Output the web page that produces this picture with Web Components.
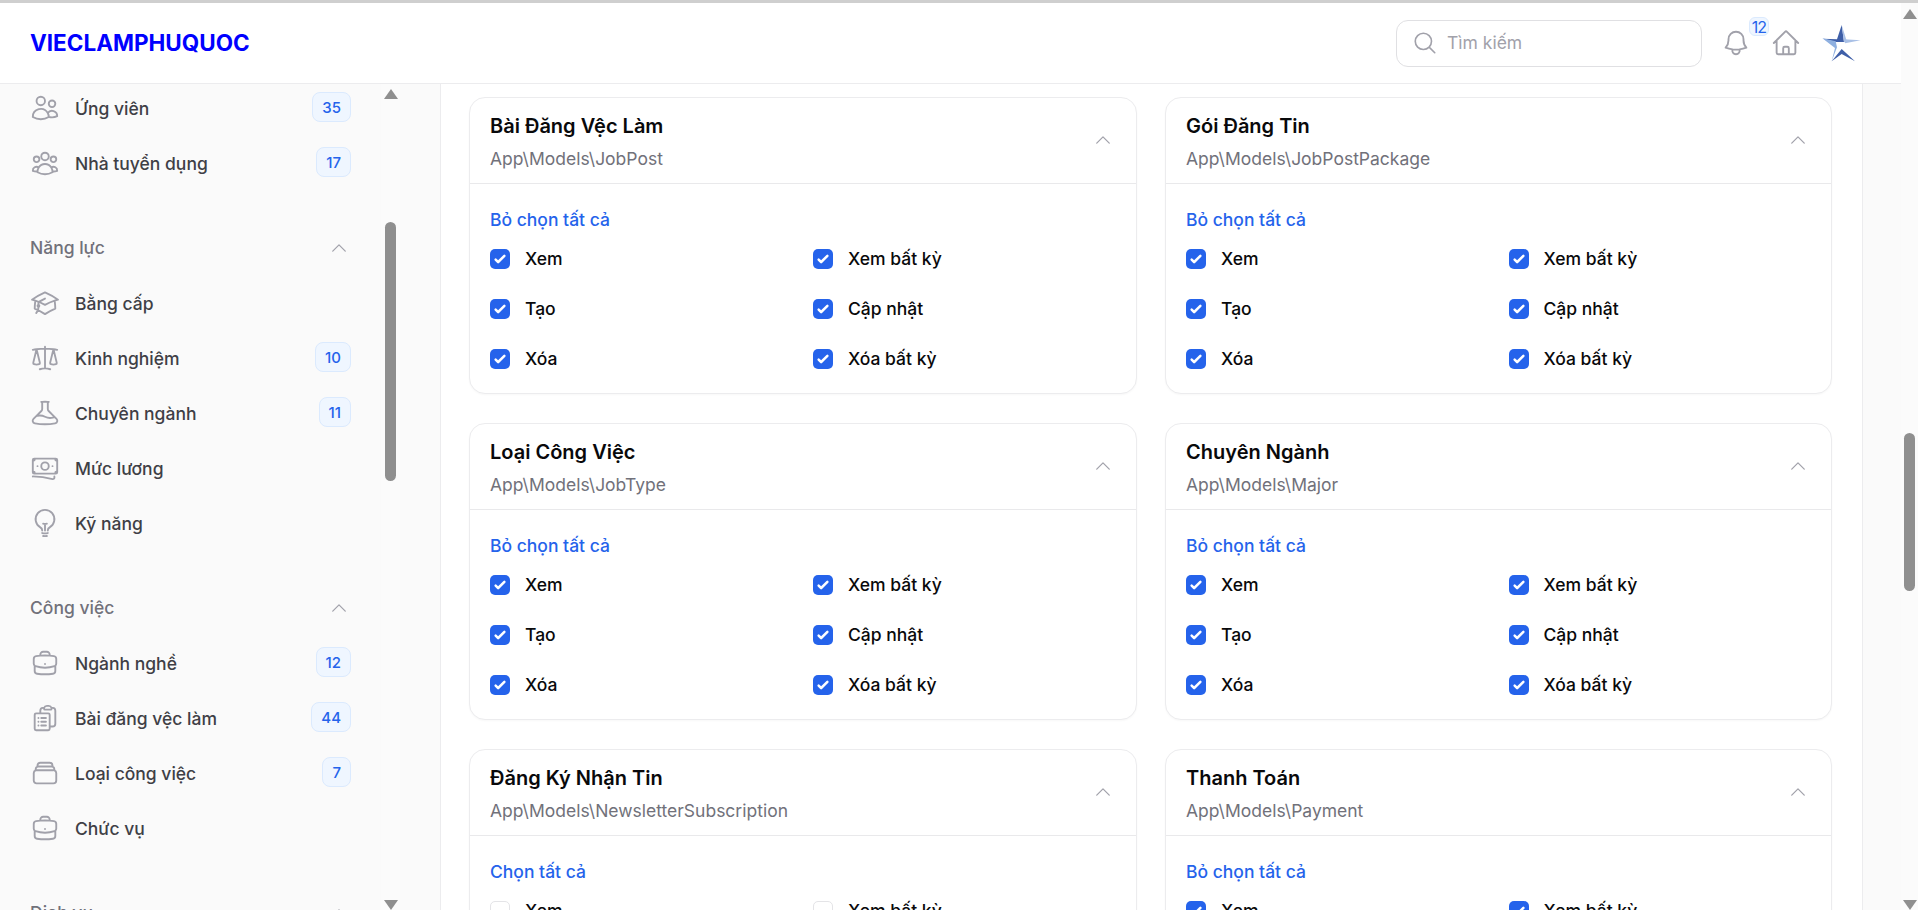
<!DOCTYPE html>
<html lang="vi">
<head>
<meta charset="utf-8">
<title>Vieclamphuquoc</title>
<style>
   html, body { margin: 0; height: 100%; overflow: hidden; background: #fff; font-family: 'Inter', 'Liberation Sans', sans-serif; }
</style>
</head>
<body>

<app-shell>
   <top-bar slot="top" logo="VIECLAMPHUQUOC" count="12"></top-bar>

   <side-nav slot="side">
      <nav-item icon="users" badge="35">Ứng viên</nav-item>
      <nav-item icon="userGroup" badge="17">Nhà tuyển dụng</nav-item>
      <nav-group label="Năng lực">
         <nav-item icon="academic">Bằng cấp</nav-item>
         <nav-item icon="scale" badge="10">Kinh nghiệm</nav-item>
         <nav-item icon="beaker" badge="11">Chuyên ngành</nav-item>
         <nav-item icon="banknotes">Mức lương</nav-item>
         <nav-item icon="bulb">Kỹ năng</nav-item>
      </nav-group>
      <nav-group label="Công việc">
         <nav-item icon="briefcase" badge="12">Ngành nghề</nav-item>
         <nav-item icon="clipboard" badge="44">Bài đăng vệc làm</nav-item>
         <nav-item icon="stack" badge="7">Loại công việc</nav-item>
         <nav-item icon="briefcase">Chức vụ</nav-item>
      </nav-group>
      <nav-group label="Dịch vụ"></nav-group>
   </side-nav>

   <perm-grid slot="main">
      <perm-card heading="Bài Đăng Vệc Làm" model="App\Models\JobPost"></perm-card>
      <perm-card heading="Gói Đăng Tin" model="App\Models\JobPostPackage"></perm-card>
      <perm-card heading="Loại Công Việc" model="App\Models\JobType"></perm-card>
      <perm-card heading="Chuyên Ngành" model="App\Models\Major"></perm-card>
      <perm-card heading="Đăng Ký Nhận Tin" model="App\Models\NewsletterSubscription" empty></perm-card>
      <perm-card heading="Thanh Toán" model="App\Models\Payment"></perm-card>
   </perm-grid>

   <scroll-rail slot="rail" gap-top="414" thumb-height="158" pad-top="6" page></scroll-rail>
</app-shell>

<script>
// heroicons outline paths, 24 grid
const ICONS = {
   users: 'M15 19.128a9.38 9.38 0 0 0 2.625.372 9.337 9.337 0 0 0 4.121-.952 4.125 4.125 0 0 0-7.533-2.493M15 19.128v-.003c0-1.113-.285-2.16-.786-3.07M15 19.128v.106A12.318 12.318 0 0 1 8.624 21c-2.331 0-4.512-.645-6.374-1.766l-.001-.109a6.375 6.375 0 0 1 11.964-3.07M12 6.375a3.375 3.375 0 1 1-6.75 0 3.375 3.375 0 0 1 6.75 0Zm8.25 2.25a2.625 2.625 0 1 1-5.25 0 2.625 2.625 0 0 1 5.25 0Z',
   userGroup: 'M18 18.72a9.094 9.094 0 0 0 3.741-.479 3 3 0 0 0-4.682-2.72m.94 3.198.001.031c0 .225-.012.447-.037.666A11.944 11.944 0 0 1 12 21c-2.17 0-4.207-.576-5.963-1.584A6.062 6.062 0 0 1 6 18.719m12 0a5.971 5.971 0 0 0-.941-3.197m0 0A5.995 5.995 0 0 0 12 12.75a5.995 5.995 0 0 0-5.058 2.772m0 0a3 3 0 0 0-4.681 2.72 8.986 8.986 0 0 0 3.74.477m.94-3.197a5.971 5.971 0 0 0-.94 3.197M15 6.75a3 3 0 1 1-6 0 3 3 0 0 1 6 0Zm6 2.25a2.25 2.25 0 1 1-4.5 0 2.25 2.25 0 0 1 4.5 0Zm-13.5 0a2.25 2.25 0 1 1-4.5 0 2.25 2.25 0 0 1 4.5 0Z',
   academic: 'M4.26 10.147a60.438 60.438 0 0 0-.491 6.347A48.62 48.62 0 0 1 12 20.904a48.62 48.62 0 0 1 8.232-4.41 60.46 60.46 0 0 0-.491-6.347m-15.482 0a50.636 50.636 0 0 0-2.658-.813A59.906 59.906 0 0 1 12 3.493a59.903 59.903 0 0 1 10.399 5.84c-.896.248-1.783.52-2.658.814m-15.482 0A50.717 50.717 0 0 1 12 13.489a50.702 50.702 0 0 1 7.74-3.342M6.75 15a.75.75 0 1 0 0-1.5.75.75 0 0 0 0 1.5Zm0 0v-3.675A55.378 55.378 0 0 1 12 8.443m-7.007 11.55A5.981 5.981 0 0 0 6.75 15.75v-1.5',
   scale: 'M12 3v17.25m0 0c-1.472 0-2.882.265-4.185.75M12 20.25c1.472 0 2.882.265 4.185.75M18.75 4.97A48.416 48.416 0 0 0 12 4.5c-2.291 0-4.545.16-6.75.47m13.5 0c1.01.143 2.01.317 3 .52m-3-.52 2.62 10.726c.122.499-.106 1.028-.589 1.202a5.988 5.988 0 0 1-2.031.352 5.988 5.988 0 0 1-2.031-.352c-.483-.174-.711-.703-.59-1.202L18.75 4.971Zm-16.5.52c.99-.203 1.99-.377 3-.52m0 0 2.62 10.726c.122.499-.106 1.028-.589 1.202a5.989 5.989 0 0 1-2.031.352 5.989 5.989 0 0 1-2.031-.352c-.483-.174-.711-.703-.59-1.202L5.25 4.971Z',
   beaker: 'M9.75 3.104v5.714a2.25 2.25 0 0 1-.659 1.591L5 14.5M9.75 3.104c-.251.023-.501.05-.75.082m.75-.082a24.301 24.301 0 0 1 4.5 0m0 0v5.714c0 .597.237 1.17.659 1.591L19.8 15.3M14.25 3.104c.251.023.501.05.75.082M19.8 15.3l-1.57.393A9.065 9.065 0 0 1 12 15a9.065 9.065 0 0 0-6.23-.693L5 14.5m14.8.8 1.402 1.402c1.232 1.232.65 3.318-1.067 3.611A48.309 48.309 0 0 1 12 21c-2.773 0-5.491-.235-8.135-.687-1.718-.293-2.3-2.379-1.067-3.61L5 14.5',
   banknotes: 'M2.25 18.75a60.07 60.07 0 0 1 15.797 2.101c.727.198 1.453-.342 1.453-1.096V18.75M3.75 4.5v.75A.75.75 0 0 1 3 6h-.75m0 0v-.375c0-.621.504-1.125 1.125-1.125H20.25M2.25 6v9m18-10.5v.75c0 .414.336.75.75.75h.75m-1.5-1.5h.375c.621 0 1.125.504 1.125 1.125v9.75c0 .621-.504 1.125-1.125 1.125h-.375m1.5-1.5H21a.75.75 0 0 0-.75.75v.75m0 0H3.75m0 0h-.375a1.125 1.125 0 0 1-1.125-1.125V15m1.5 1.5v-.75A.75.75 0 0 0 3 15h-.75M15 10.5a3 3 0 1 1-6 0 3 3 0 0 1 6 0Zm3 0h.008v.008H18V10.5Zm-12 0h.008v.008H6V10.5Z',
   bulb: 'M12 18v-5.25m0 0a6.01 6.01 0 0 0 1.5-.189m-1.5.189a6.01 6.01 0 0 1-1.5-.189m3.75 7.478a12.06 12.06 0 0 1-4.5 0m3.75 2.383a14.406 14.406 0 0 1-3 0M14.25 18v-.192c0-.983.658-1.823 1.508-2.316a7.5 7.5 0 1 0-7.517 0c.85.493 1.509 1.333 1.509 2.316V18',
   briefcase: 'M20.25 14.15v4.25c0 1.094-.787 2.036-1.872 2.18-2.087.277-4.216.42-6.378.42s-4.291-.143-6.378-.42c-1.085-.144-1.872-1.086-1.872-2.18v-4.25m16.5 0a2.18 2.18 0 0 0 .75-1.661V8.706c0-1.081-.768-2.015-1.837-2.175a48.114 48.114 0 0 0-3.413-.387m4.5 8.006c-.194.165-.42.295-.673.38A23.978 23.978 0 0 1 12 15.75c-2.648 0-5.195-.429-7.577-1.22a2.016 2.016 0 0 1-.673-.38m0 0A2.18 2.18 0 0 1 3 12.489V8.706c0-1.081.768-2.015 1.837-2.175a48.111 48.111 0 0 1 3.413-.387m7.5 0V5.25A2.25 2.25 0 0 0 13.5 3h-3a2.25 2.25 0 0 0-2.25 2.25v.894m7.5 0a48.667 48.667 0 0 0-7.5 0M12 12.75h.008v.008H12v-.008Z',
   clipboard: 'M9 12h3.75M9 15h3.75M9 18h3.75m3 .75H18a2.25 2.25 0 0 0 2.25-2.25V6.108c0-1.123-.84-2.1-1.976-2.192a48.424 48.424 0 0 0-1.123-.08m-5.801 0c-.065.21-.1.433-.1.664 0 .414.336.75.75.75h4.5a.75.75 0 0 0 .75-.75 2.25 2.25 0 0 0-.1-.664m-5.8 0A2.251 2.251 0 0 1 13.5 2.25H15c1.012 0 1.867.668 2.15 1.586m-5.8 0c-.376.023-.75.05-1.124.08C9.095 4.01 8.25 4.973 8.25 6.108V8.25m0 0H4.875c-.621 0-1.125.504-1.125 1.125v11.25c0 .621.504 1.125 1.125 1.125h9.75c.621 0 1.125-.504 1.125-1.125V9.375c0-.621-.504-1.125-1.125-1.125H8.25ZM6.75 12h.008v.008H6.75V12Zm0 3h.008v.008H6.75V15Zm0 3h.008v.008H6.75V18Z',
   stack: 'M6 6.878V6a2.25 2.25 0 0 1 2.25-2.25h7.5A2.25 2.25 0 0 1 18 6v.878m-12 0c.235-.083.487-.128.75-.128h10.5c.263 0 .515.045.75.128m-12 0A2.25 2.25 0 0 0 4.5 9v.878m13.5-3A2.25 2.25 0 0 1 19.5 9v.878m0 0a2.246 2.246 0 0 0-.75-.128H5.25c-.263 0-.515.045-.75.128m15 0A2.25 2.25 0 0 1 21 12v6a2.25 2.25 0 0 1-2.25 2.25H5.25A2.25 2.25 0 0 1 3 18v-6c0-.98.626-1.813 1.5-2.122',
   bell: 'M14.857 17.082a23.848 23.848 0 0 0 5.454-1.31A8.967 8.967 0 0 1 18 9.75V9A6 6 0 0 0 6 9v.75a8.967 8.967 0 0 1-2.312 6.022c1.733.64 3.56 1.085 5.455 1.31m5.714 0a24.255 24.255 0 0 1-5.714 0m5.714 0a3 3 0 1 1-5.714 0',
   home: 'm2.25 12 8.954-8.955c.44-.439 1.152-.439 1.591 0L21.75 12M4.5 9.75v10.125c0 .621.504 1.125 1.125 1.125H9.75v-4.875c0-.621.504-1.125 1.125-1.125h2.25c.621 0 1.125.504 1.125 1.125V21h4.125c.621 0 1.125-.504 1.125-1.125V9.75M8.25 21h8.25',
   search: 'm21 21-5.197-5.197m0 0A7.5 7.5 0 1 0 5.196 5.196a7.5 7.5 0 0 0 10.607 10.607Z',
   chevron: 'm4.5 15.75 7.5-7.5 7.5 7.5'
}

function icon(name, size, color, stroke = 1.5) {
   return `<svg width="${size}" height="${size}" viewBox="0 0 24 24" fill="none" stroke="${color}" stroke-width="${stroke}" stroke-linecap="round" stroke-linejoin="round" style="display:block;flex:none"><path d="${ICONS[name]}"/></svg>`
}

// PAGE FRAME
class AppShell extends HTMLElement {
   constructor() {
      super()
      this.attachShadow({ mode: 'open' })
      this.shadowRoot.innerHTML = `
      <style>
         :host { display: flex; flex-direction: column; height: 910px; overflow: hidden; }
         .strip { height: 3px; flex: none; background: #cfcfcf; }
         .frame { flex: 1; min-height: 0; display: flex; }
         .left { flex: 1; min-width: 0; display: flex; flex-direction: column; }
         .body { flex: 1; min-height: 0; display: flex; }
         .main { flex: 1; min-width: 0; overflow: hidden; background: #fff; }
         .gutter { width: 38px; flex: none; background: #fafafa; border-left: 1px solid #ececee; }
      </style>
      <div class="strip"></div>
      <div class="frame">
         <div class="left">
            <slot name="top"></slot>
            <div class="body">
               <slot name="side"></slot>
               <div class="main"><slot name="main"></slot></div>
               <div class="gutter"></div>
            </div>
         </div>
         <slot name="rail"></slot>
      </div>`
   }
}

// HEADER
class TopBar extends HTMLElement {
   connectedCallback() {
      this.attachShadow({ mode: 'open' })
      this.shadowRoot.innerHTML = `
      <style>
         :host { display: flex; align-items: center; height: 81px; box-sizing: border-box; flex: none; padding: 0 34px 0 30px; background: #fff; border-bottom: 1px solid #ececee; }
         .logo { font-size: 22.5px; font-weight: 700; color: #0000ff; margin-bottom: 2px; }
         .search { margin-left: auto; width: 306px; height: 47px; box-sizing: border-box; display: flex; align-items: center; gap: 9px; padding-left: 15px; border: 1px solid #e0e0e3; border-radius: 12px; color: #a1a1aa; font-size: 17.5px; }
         .search span { margin-bottom: 1px; }
         .bell { position: relative; margin-left: 19px; }
         .count { position: absolute; left: 28px; top: -11px; width: 20px; height: 19px; box-sizing: border-box; display: flex; align-items: center; justify-content: center; background: #eff6ff; border: 1px solid #dbeafe; border-radius: 6px; color: #2563eb; font-size: 16px; letter-spacing: -1px; }
         .home { margin-left: 20px; }
         .star { margin-left: 14px; display: block; }
      </style>
      <div class="logo">${this.getAttribute('logo')}</div>
      <div class="search">${icon('search', 26, '#a1a1aa')}<span>Tìm kiếm</span></div>
      <div class="bell">${icon('bell', 30, '#a1a1aa')}<span class="count">${this.getAttribute('count')}</span></div>
      <div class="home">${icon('home', 30, '#a1a1aa')}</div>
      <svg class="star" width="52" height="46" viewBox="0 0 156 138">
         <polygon points="80,15 87,66 62,66 24,56 66,58" fill="#3f5fa8"/>
         <polygon points="87,58 137,61 90,70" fill="#a9c0e6"/>
         <polygon points="22,55 62,64 66,82 50,124 60,84" fill="#8fb0e0"/>
         <polygon points="80,15 96,66 87,66" fill="#a9c0e6"/>
         <polygon points="50,124 80,87 120,124 80,102" fill="#3f5fa8"/>
      </svg>`
   }
}

// SIDEBAR
class SideNav extends HTMLElement {
   constructor() {
      super()
      this.attachShadow({ mode: 'open' })
      this.shadowRoot.innerHTML = `
      <style>
         :host { display: flex; flex: none; width: 441px; box-sizing: border-box; background: #fafafa; border-right: 1px solid #ececee; overflow: hidden; }
         .list { width: 381px; flex: none; box-sizing: border-box; padding: 0 30px; margin-top: -3.5px; }
      </style>
      <div class="list"><slot></slot></div>
      <scroll-rail gap-top="123" thumb-height="259" pad-top="5"></scroll-rail>`
   }
}

class NavGroup extends HTMLElement {
   connectedCallback() {
      this.attachShadow({ mode: 'open' })
      this.shadowRoot.innerHTML = `
      <style>
         :host { display: block; margin-top: 30px; }
         .head { height: 55px; box-sizing: border-box; padding-bottom: 1px; display: flex; align-items: center; justify-content: space-between; padding-right: 2.5px; font-size: 17.5px; font-weight: 500; color: #71717a; }
      </style>
      <div class="head"><span>${this.getAttribute('label')}</span>${icon('chevron', 20, '#a1a1aa')}</div>
      <slot></slot>`
   }
}

class NavItem extends HTMLElement {
   connectedCallback() {
      const badge = this.getAttribute('badge')
      this.attachShadow({ mode: 'open' })
      this.shadowRoot.innerHTML = `
      <style>
         :host { display: flex; align-items: center; height: 55px; gap: 15px; font-size: 17.5px; font-weight: 500; color: #3f3f46; }
         .label { flex: 1; }
         .badge { height: 30px; box-sizing: border-box; padding: 0 9px; margin-top: -2px; display: flex; align-items: center; background: #eff6ff; border: 1px solid #dbeafe; border-radius: 8px; color: #2563eb; font-size: 15px; }
      </style>
      ${icon(this.getAttribute('icon'), 30, '#a1a1aa')}
      <span class="label"><slot></slot></span>
      ${badge ? `<span class="badge">${badge}</span>` : ''}`
   }
}

// fake browser scrollbar
class ScrollRail extends HTMLElement {
   connectedCallback() {
      const page = this.hasAttribute('page')
      this.attachShadow({ mode: 'open' })
      this.shadowRoot.innerHTML = `
      <style>
         :host { display: flex; flex-direction: column; align-items: center; flex: none; width: ${page ? 17 : 19}px; height: 100%; background: #fbfbfb; box-sizing: border-box; padding-top: ${this.getAttribute('pad-top')}px; overflow: hidden; }
         .up, .down { width: 0; height: 0; border-left: 7px solid transparent; border-right: 7px solid transparent; flex: none; }
         .up { border-bottom: 10px solid #8f8f8f; }
         .down { border-top: 10px solid #8f8f8f; margin-top: auto; }
         .thumb { width: 11px; flex: none; background: #8f8f8f; border-radius: 6px; margin-top: ${this.getAttribute('gap-top')}px; height: ${this.getAttribute('thumb-height')}px; }
      </style>
      <div class="up"></div>
      <div class="thumb"></div>
      <div class="down"></div>`
   }
}

// PERMISSION CARDS
class PermGrid extends HTMLElement {
   constructor() {
      super()
      this.attachShadow({ mode: 'open' })
      this.shadowRoot.innerHTML = `
      <style>
         :host { display: grid; grid-template-columns: 668px 1fr; gap: 29px 28px; padding: 13px 30px 0 28px; }
      </style>
      <slot></slot>`
   }
}

class PermCard extends HTMLElement {
   connectedCallback() {
      const empty = this.hasAttribute('empty')
      const names = ['Xem', 'Xem bất kỳ', 'Tạo', 'Cập nhật', 'Xóa', 'Xóa bất kỳ']
      this.attachShadow({ mode: 'open' })
      this.shadowRoot.innerHTML = `
      <style>
         :host { display: block; height: 297px; box-sizing: border-box; background: #fff; border: 1px solid #ececee; border-radius: 16px; box-shadow: 0 1px 2px rgb(0 0 0 / 0.03); }
         .head { height: 86px; box-sizing: border-box; display: flex; align-items: center; justify-content: space-between; padding: 0 23px 0 20px; border-bottom: 1px solid #e9e9eb; }
         .head svg { margin-bottom: 2px; }
         .titles { margin-top: 4px; }
         h3 { margin: 0; font-size: 20px; font-weight: 600; line-height: 25px; color: #09090b; }
         .model { margin-top: 7px; font-size: 17.5px; line-height: 25px; color: #71717a; }
         .body { padding: 23px 20px 0; }
         .all { font-size: 17.5px; font-weight: 500; line-height: 25px; color: #2563eb; margin-bottom: 15px; }
         .rows { display: grid; grid-template-columns: 1fr 1fr; gap: 26px 20px; }
      </style>
      <div class="head">
         <div class="titles"><h3>${this.getAttribute('heading')}</h3><div class="model">${this.getAttribute('model')}</div></div>
         ${icon('chevron', 20, '#a1a1aa')}
      </div>
      <div class="body">
         <div class="all">${empty ? 'Chọn tất cả' : 'Bỏ chọn tất cả'}</div>
         <div class="rows">${names.map(n => `<perm-check ${empty ? '' : 'checked'}>${n}</perm-check>`).join('')}</div>
      </div>`
   }
}

class PermCheck extends HTMLElement {
   connectedCallback() {
      this.attachShadow({ mode: 'open' })
      this.shadowRoot.innerHTML = `
      <style>
         :host { display: flex; align-items: center; gap: 15px; height: 24px; font-size: 17.5px; font-weight: 500; color: #09090b; }
         .box { width: 20px; height: 20px; flex: none; box-sizing: border-box; border-radius: 5px; display: flex; align-items: center; justify-content: center; }
         .on { background: #2563eb; }
         .off { background: #fff; border: 1px solid #e4e4e7; }
         .text { margin-bottom: 2px; }
      </style>
      <span class="box ${this.hasAttribute('checked') ? 'on' : 'off'}">
         ${this.hasAttribute('checked') ? '<svg width="20" height="20" viewBox="0 0 16 16" fill="#fff"><path d="M12.207 4.793a1 1 0 010 1.414l-5 5a1 1 0 01-1.414 0l-2-2a1 1 0 011.414-1.414L6.5 9.086l4.293-4.293a1 1 0 011.414 0z"/></svg>' : ''}
      </span>
      <span class="text"><slot></slot></span>`
   }
}

// Register the elements
function register() {
   customElements.define('scroll-rail', ScrollRail)
   customElements.define('perm-check', PermCheck)
   customElements.define('perm-card', PermCard)
   customElements.define('perm-grid', PermGrid)
   customElements.define('nav-item', NavItem)
   customElements.define('nav-group', NavGroup)
   customElements.define('side-nav', SideNav)
   customElements.define('top-bar', TopBar)
   customElements.define('app-shell', AppShell)
}

register()
</script>
</body>
</html>
